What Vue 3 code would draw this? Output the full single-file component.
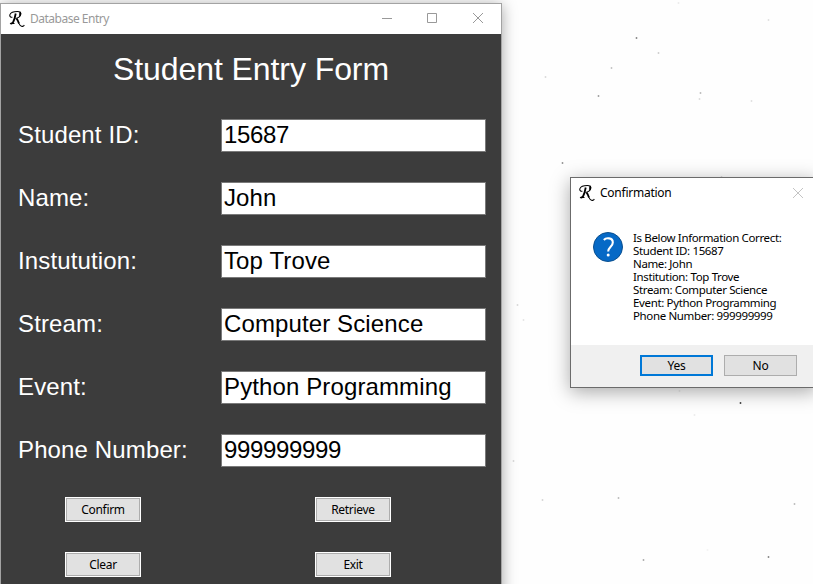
<script setup>
import { ref } from 'vue'

const fields = ref([
  { label: 'Student ID:', value: '15687' },
  { label: 'Name:', value: 'John' },
  { label: 'Instutution:', value: 'Top Trove' },
  { label: 'Stream:', value: 'Computer Science' },
  { label: 'Event:', value: 'Python Programming' },
  { label: 'Phone Number:', value: '999999999' },
])
const isNumeric = (text) => /^\d+$/.test(text)
const actions = ['Confirm', 'Retrieve', 'Clear', 'Exit']
const message = [
  'Is Below Information Correct:',
  'Student ID: 15687',
  'Name: John',
  'Institution: Top Trove',
  'Stream: Computer Science',
  'Event: Python Programming',
  'Phone Number: 999999999',
]
// Dust on the desktop background: x, y, opacity
const specks = [
  [636, 37, 0.5], [658, 52, 0.2], [611, 67, 0.25], [598, 95, 0.4], [545, 76, 0.15],
  [700, 92, 0.28], [699, 98, 0.14], [751, 100, 0.12], [768, 19, 0.12], [678, 2, 0.07],
  [562, 162, 0.45], [721, 176, 0.15], [740, 402, 0.8], [513, 460, 0.15], [542, 499, 0.17],
  [618, 497, 0.28], [794, 503, 0.28], [643, 559, 0.35], [768, 556, 0.5], [694, 414, 0.07],
  [679, 390, 0.07], [517, 304, 0.15], [523, 319, 0.1], [707, 549, 0.04],
]
</script>

<template>
  <main class="desktop">
    <svg class="dust" width="813" height="584">
      <g v-for="(s, i) in specks" :key="i" :opacity="s[2]">
        <rect :x="s[0]" :y="s[1]" width="1" height="2" fill="#222" />
        <rect :x="s[0] - 1" :y="s[1]" width="3" height="2" fill="#222" opacity=".25" />
      </g>
    </svg>

    <section class="window">
      <header class="titlebar">
        <svg class="logo" viewBox="0 0 16 16">
          <path d="M3.4 6.3C1.5 6.5.3 5.2.9 3.6 1.8 1.2 5.5.5 8.4.5c2.4 0 3.8.9 3.3 2.9-.5 2-2.6 3.6-5.2 4" />
          <path class="thick" d="M6.7 2.5C6.2 5.5 5.3 9 4.2 11c-.8 1.5-2 2-2.8 1" />
          <path class="thick" d="M10.6 1.3c1 .8.8 2.3 0 3.5M7.5 7.5c1.4 1.2 1.5 3.3 2.6 5" />
          <path d="M10 12.4c1 2.4 2.6 3.4 4 2.8.7-.3 1-.7 1.3-1.3M3.5 12.5h2" />
        </svg>
        <span class="window-title">Database Entry</span>
        <svg class="controls" width="112" height="14" viewBox="0 0 112 14">
          <path d="M5 6.5h10M50.5 1.5h9v9h-9zM96 1l10 10M106 1l-10 10" />
        </svg>
      </header>
      <div class="form">
        <h1>Student Entry Form</h1>
        <div class="fields">
          <label v-for="f in fields" :key="f.label" class="field">
            <span>{{ f.label }}</span>
            <input v-model="f.value" type="text" :class="{ numeric: isNumeric(f.value) }" />
          </label>
        </div>
        <div class="actions">
          <button v-for="a in actions" :key="a">{{ a }}</button>
        </div>
      </div>
    </section>

    <section class="dialog">
      <header class="dialog-title">
        <svg class="logo" viewBox="0 0 16 16">
          <path d="M3.4 6.3C1.5 6.5.3 5.2.9 3.6 1.8 1.2 5.5.5 8.4.5c2.4 0 3.8.9 3.3 2.9-.5 2-2.6 3.6-5.2 4" />
          <path class="thick" d="M6.7 2.5C6.2 5.5 5.3 9 4.2 11c-.8 1.5-2 2-2.8 1" />
          <path class="thick" d="M10.6 1.3c1 .8.8 2.3 0 3.5M7.5 7.5c1.4 1.2 1.5 3.3 2.6 5" />
          <path d="M10 12.4c1 2.4 2.6 3.4 4 2.8.7-.3 1-.7 1.3-1.3M3.5 12.5h2" />
        </svg>
        <span>Confirmation</span>
        <svg class="close" width="12" height="12" viewBox="0 0 12 12">
          <path d="M1 1l10 10M11 1L1 11" />
        </svg>
      </header>
      <div class="dialog-body">
        <svg class="question" width="30" height="30" viewBox="0 0 30 30">
          <circle cx="15" cy="15" r="14.5" fill="#0669c6" stroke="#0b4f8e" />
          <path d="M10.9 8C12.8 5.6 19.8 5.3 19.8 10.4c0 4.2-4.6 4.4-4.6 9.2" fill="none" stroke="#fff" stroke-width="2.1" />
          <circle cx="15.2" cy="23" r="1.5" fill="#fff" />
        </svg>
        <div class="message">
          <p v-for="line in message" :key="line">{{ line }}</p>
        </div>
      </div>
      <footer>
        <button class="primary">Yes</button>
        <button>No</button>
      </footer>
    </section>
  </main>
</template>

<style>
body {
  margin: 0;
  overflow: hidden;
}
</style>

<style scoped>
* {
  box-sizing: border-box;
}
.desktop {
  position: relative;
  width: 813px;
  height: 584px;
  overflow: hidden;
  background: #fefefe;
  font-family: "Noto Sans", "Open Sans", sans-serif;
  font-size: 12px;
  color: #000;
}
.dust {
  position: absolute;
  inset: 0;
}
.window {
  position: absolute;
  left: 0;
  top: 3px;
  width: 502px;
  height: 620px;
  border: 1px solid #a3a3a3;
  background: #3c3c3c;
  box-shadow: 0 2px 14px rgba(0, 0, 0, 0.36);
}
.titlebar {
  display: flex;
  align-items: center;
  height: 30px;
  padding: 0 12px 0 8px;
  background: #fff;
}
.logo {
  width: 16px;
  height: 16px;
  flex: none;
  overflow: visible;
}
.logo path {
  fill: none;
  stroke: #000;
  stroke-width: 1.05;
}
.logo .thick {
  stroke-width: 1.8;
}
.window-title {
  margin: -2px 0 0 5px;
  color: #999;
  font-size: 12px;
  letter-spacing: -0.5px;
}
.controls {
  margin-left: auto;
  fill: none;
  stroke: #999;
  stroke-width: 1;
}
.form {
  font-family: "Liberation Sans", Arial, sans-serif;
}
h1 {
  margin: 0;
  height: 85px;
  padding-top: 17px;
  color: #fff;
  font-size: 32px;
  font-weight: 400;
  line-height: 36px;
  letter-spacing: -0.08px;
  text-align: center;
}
.fields {
  display: grid;
  gap: 30px;
  padding: 0 15px 0 17px;
}
.field {
  display: grid;
  grid-template-columns: 203px 265px;
  height: 33px;
  color: #fff;
  font-size: 24px;
  line-height: 32px;
  letter-spacing: 0.13px;
}
input {
  width: 265px;
  height: 33px;
  padding: 0 0 1px 2px;
  border: 1px solid #7a7a7a;
  border-radius: 0;
  outline: 0;
  background: #fff;
  color: #000;
  font: 24px "Liberation Sans", Arial, sans-serif;
  letter-spacing: 0.12px;
}
input.numeric {
  letter-spacing: -0.35px;
}
.actions {
  display: grid;
  grid-template-columns: 76px 76px;
  gap: 30px 174px;
  padding: 30px 0 0 64px;
}
button {
  padding: 0;
  border: 1px solid #adadad;
  border-radius: 0;
  background: #e1e1e1;
  color: #000;
  font: 12px "Noto Sans", "Open Sans", sans-serif;
  letter-spacing: -0.3px;
}
.actions button {
  height: 25px;
  background: #e1e1e1;
  border-color: #fff;
  box-shadow: inset 0 0 0 1px #adadad;
}
.dialog {
  position: absolute;
  left: 570px;
  top: 177px;
  width: 247px;
  height: 211px;
  border: 1px solid #6b6b6b;
  background: #fff;
  box-shadow: 0 4px 18px rgba(0, 0, 0, 0.34);
}
.dialog-title {
  display: flex;
  align-items: center;
  height: 29px;
  padding: 0 12px 0 8px;
}
.dialog-title span {
  margin-left: 5px;
  letter-spacing: -0.25px;
}
.close {
  margin-left: auto;
  fill: none;
  stroke: #c4c4c4;
}
.dialog-body {
  display: flex;
  gap: 10px;
  height: 138px;
  padding: 25px 0 0 22px;
}
.message {
  margin-top: -1px;
  font-size: 11.5px;
  line-height: 13px;
  letter-spacing: -0.36px;
  white-space: nowrap;
}
p {
  margin: 0;
}
footer {
  display: flex;
  gap: 11px;
  height: 42px;
  padding: 10px 0 0 69px;
  background: #f0f0f0;
}
footer button {
  width: 73px;
  height: 21px;
}
footer .primary {
  border: 2px solid #0078d7;
}
</style>
